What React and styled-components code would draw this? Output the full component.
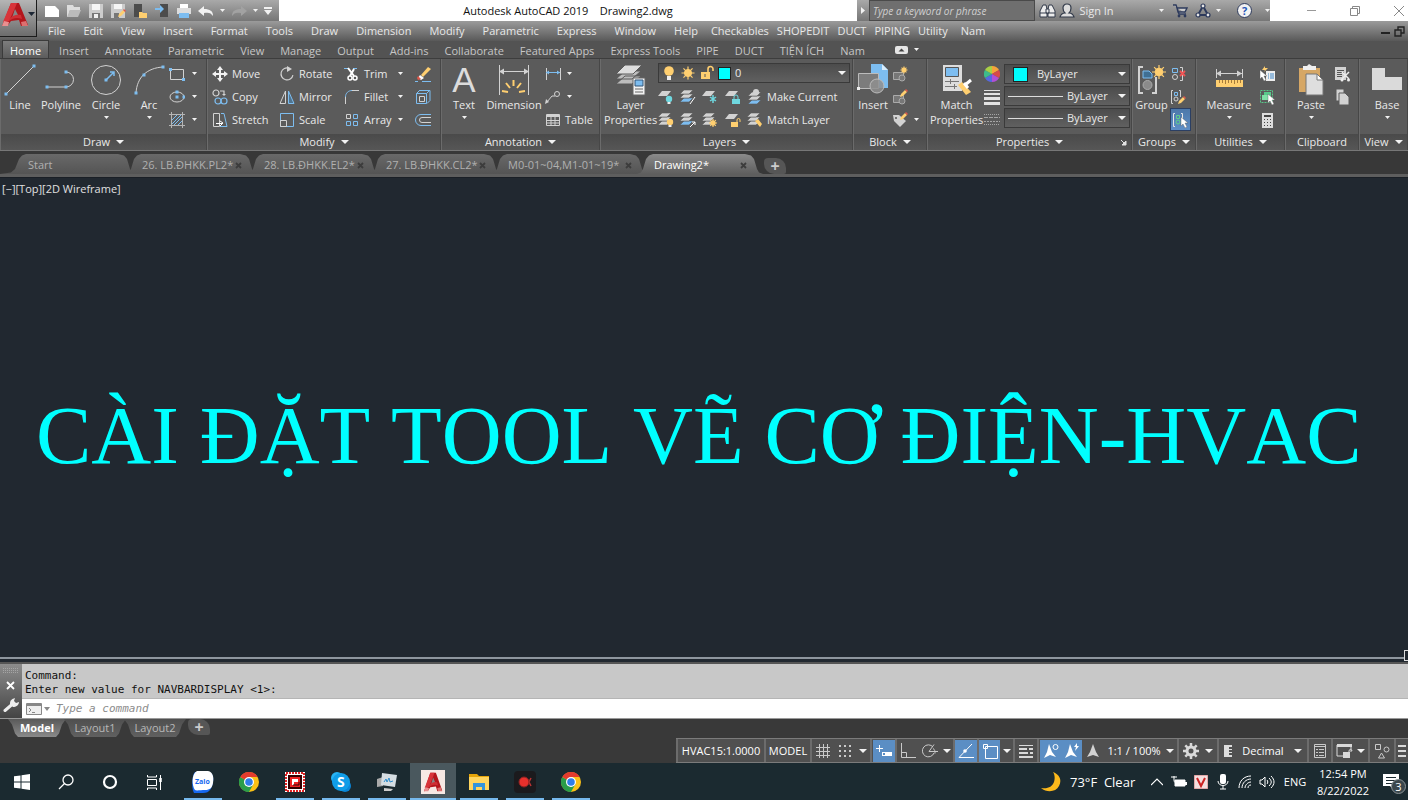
import React, { useState } from "react";
import styled, { createGlobalStyle } from "styled-components";

const GlobalStyle = createGlobalStyle`
  * { box-sizing: border-box; }
  html, body, #root { height: 100%; }
  body {
    margin: 0;
    overflow: hidden;
    background: #212830;
    color: #e9e9e9;
    font-family: "Open Sans", "Noto Sans", sans-serif;
    font-size: 11px;
    line-height: 16px;
  }
  button, input, select {
    font: inherit;
    color: inherit;
    background: none;
    border: 0;
    padding: 0;
    margin: 0;
    outline: 0;
  }
  svg { display: block; flex: none; }
`;

const B = "#7dbdf0";
const G = "#d2d2d2";
const Y = "#ffcf70";

const sheets = (x, y, c = G) => (
  <g stroke="#5b5b5b" strokeWidth="0.6">
    <path d={`M${x} ${y + 12}l4-4h9l-4 4z`} fill={c === "blue" ? B : G} />
    <path d={`M${x} ${y + 8}l4-4h9l-4 4z`} fill={G} />
    <path d={`M${x} ${y + 4}l4-4h9l-4 4z`} fill={G} />
  </g>
);

const sheet = <path d="M0 7l4-5h9l-4 5z" fill={G} />;

const bulb = (x, y, c) => (
  <g>
    <circle cx={x} cy={y} r="3.2" fill={c} />
    <path d={`M${x - 1.5} ${y + 3}h3v2h-3z`} fill="#eee" />
  </g>
);

const sun = (x, y, r) => (
  <g fill={Y} stroke={Y}>
    <circle cx={x} cy={y} r={r * 0.55} />
    <path
      strokeWidth="1.2"
      d={`M${x} ${y - r}v${r * 2}M${x - r} ${y}h${r * 2}M${x - r * 0.7} ${y - r * 0.7}l${r * 1.4} ${r * 1.4}M${x + r * 0.7} ${y - r * 0.7}l${-r * 1.4} ${r * 1.4}`}
    />
  </g>
);

const pencil = (x, y) => (
  <g>
    <path d={`M${x} ${y + 7}l1-3 4-4 2 2-4 4z`} fill={Y} />
    <path d={`M${x + 5} ${y}l1-1 2 2-1 1z`} fill="#e0584a" />
  </g>
);

const cursor = (x, y) => (
  <path d={`M${x} ${y}v9l2-2 2 4 2-1-2-4h3z`} fill="#fff" stroke="#555" strokeWidth="0.4" />
);

const dot = (x, y) => <rect x={x - 1.5} y={y - 1.5} width="3" height="3" fill={B} />;

const logoA = (
  <g>
    <path d="M9 1h8l9 22-7 1-2-6-8 1-3 4-6 1z" fill="#b3161c" />
    <path d="M9 1L1 20l6-1 6-13 2-5z" fill="#d8343a" />
    <path d="M13 7l3 6-6 3z" fill="#858585" />
    <path d="M7 17c4-4 8-5 12-4l1 4c-5-2-9-1-13 2z" fill="#cf2f35" />
    <path d="M0 24l2-5 5 1-1 4z" fill="#e89090" />
    <path d="M20 24l-1-4 5-1 2 5z" fill="#dc7070" />
  </g>
);

const chrome = (
  <g>
    <circle cx="10" cy="10" r="10" fill="#fbc116" />
    <path d="M10 10L1.3 5A10 10 0 0 0 10 20l4.5-8z" fill="#2a9d4a" />
    <path d="M1.3 5A10 10 0 0 1 18.7 5H10v5z" fill="#e33b2e" />
    <circle cx="10" cy="10" r="5" fill="#fff" />
    <circle cx="10" cy="10" r="3.8" fill="#2f7de9" />
  </g>
);

// [width, height, drawing]
const ICONS = {
  autocad: [26, 24, logoA],
  caret: [8, 4, <path d="M0 0h8L4 4z" fill="#f2f2f2" />],
  caretSmall: [5, 3, <path d="M0 0h5L2.5 3z" fill="#f2f2f2" />],
  caretDark: [7, 4, <path d="M0 0h7L3.5 4z" fill="#1d2735" />],
  caretGrey: [6, 4, <path d="M0 0h6L3 4z" fill="#888" />],
  close: [7, 7, <path d="M1 1l5 5M6 1L1 6" stroke="#3c3c3c" strokeWidth="1.8" />],
  newDoc: [16, 16, <path d="M1 3h10l4 4v7H1z" fill="#fff" />],
  open: [16, 16, <g><path d="M1 2h6l1 2h6v3H4L2 14H1z" fill="#ddd" /><path d="M4 7h11l-3 7H1z" fill="#bbb" /></g>],
  save: [16, 16, <g><path d="M1 1h14v14H1z" fill="#ccc" /><path d="M4 1h8v6H4z" fill="#f5f5f5" /><path d="M4 10h8v5H4z" fill="#777" /><path d="M6 11h4v4H6z" fill="#f0f0f0" /></g>],
  saveAs: [16, 16, <g><path d="M1 1h14v14H1z" fill="#ccc" /><path d="M4 1h8v5H4z" fill="#f5f5f5" /><path d="M4 10h5v5H4z" fill="#777" />{pencil(8, 7)}</g>],
  openMobile: [16, 16, <g><path d="M2 1h8v13H2z" fill="#4c4c4c" /><path d="M7 9h3l1 1h4v5H7z" fill={Y} /></g>],
  saveMobile: [16, 16, <g><path d="M6 1h8v13H6z" fill="#4c4c4c" /><path d="M1 5h5V2l4 4-4 4V7H1z" fill={B} /></g>],
  print: [16, 16, <g><path d="M4 1h8v4H4z" fill="#fff" /><path d="M1 5h14v6H1z" fill="#ddd" /><path d="M3 10h10v5H3z" fill={B} /></g>],
  undo: [16, 12, <path d="M0 6l6-5v3c6 0 9 2 9 7-2-3-4-4-9-3v3z" fill="#f2f2f2" />],
  redo: [16, 12, <path d="M16 6l-6-5v3c-6 0-9 2-9 7 2-3 4-4 9-3v3z" fill="#a2a2a2" />],
  customize: [8, 8, <path d="M0 0h8v2H0zM0 3h8L4 8z" fill="#f2f2f2" />],
  play: [4, 7, <path d="M0 0l4 3.5L0 7z" fill="#f2f2f2" />],
  binoculars: [17, 16, <g fill="#ececec" stroke="#333b4a"><path d="M4 2h3l1 4v8H1V8z" /><path d="M10 2h3l3 6v6H9V6z" /><path d="M7 6h3v4H7z" /><path d="M1 10h7M9 10h7" /></g>],
  user: [16, 16, <path d="M8 1c3 0 4 2 4 4s-1 4-2 5c3 0 4 1 5 4H1c1-3 2-4 5-4-1-1-2-3-2-5s1-4 4-4z" fill="#ddd" stroke="#333b4a" strokeWidth="1.2" />],
  cart: [16, 16, <g><path d="M1 2h3l3 9h7M5 5h10l-2 4H6z" fill="#ccc" stroke="#2d3a5c" strokeWidth="1.4" /><circle cx="7" cy="13" r="1.4" fill="#2d3a5c" /><circle cx="13" cy="13" r="1.4" fill="#2d3a5c" /></g>],
  share: [16, 16, <g fill="#e6e6e6" stroke="#2d3a5c" strokeWidth="1.2"><path d="M8 3L3 12h10z" fill="none" strokeWidth="2" /><circle cx="8" cy="3" r="2" /><circle cx="3" cy="12" r="2" /><circle cx="13" cy="12" r="2" /></g>],
  minimize: [9, 9, <path d="M0 4.500h9" stroke="#999" />],
  restore: [10, 10, <g fill="none" stroke="#888"><path d="M.5 2.500h7v7h-7z" /><path d="M2.500 2.500v-2h7v7h-2" /></g>],
  windowClose: [10, 10, <path d="M0 0l10 10M10 0L0 10" stroke="#888" />],
  docMin: [9, 9, <path d="M0 7h9" stroke="#222" strokeWidth="2" />],
  docRestore: [11, 11, <g fill="none" stroke="#222" strokeWidth="1.4"><path d="M1 4h6v6H1z" /><path d="M4 4V1h6v6H7" /></g>],
  ribbonToggle: [13, 8, <g><rect width="13" height="8" rx="2" fill="#e6e6e6" /><path d="M3.500 5.500h6l-3-3z" fill="#444" /></g>],

  line: [34, 34, <g><path d="M3 31L31 3" stroke={G} />{dot(3, 31)}{dot(31, 3)}</g>],
  polyline: [34, 34, <g><path d="M3 24h19a7.500 7.500 0 0 0 0-15" stroke={G} fill="none" />{dot(3, 24)}{dot(22, 24)}{dot(22, 9)}</g>],
  circle: [34, 34, <g><circle cx="17" cy="17" r="14.500" stroke={G} fill="none" /><path d="M17 17l8-8m-4 0h4v4" stroke={B} fill="none" strokeWidth="1.500" />{dot(17, 17)}</g>],
  arc: [34, 34, <g><path d="M4 30C5 14 15 5 31 4" stroke={G} fill="none" />{dot(4, 30)}{dot(12, 12)}{dot(31, 4)}</g>],
  rectangle: [16, 16, <g><path d="M1.500 3.500h13v10h-13z" fill="none" stroke={G} />{dot(1.5, 3.5)}{dot(14.5, 13.5)}</g>],
  ellipse: [16, 16, <g><ellipse cx="8" cy="8" rx="7" ry="5" fill="none" stroke={G} />{dot(8, 8)}{dot(15, 8)}{dot(8, 3)}</g>],
  hatch: [16, 16, <g><path d="M2.500 0v16M13.500 0v16M0 2.500h16M0 13.500h16" stroke="#b5b5b5" fill="none" /><path d="M3 8l5-5M3 12l9-9M5 13l8-8M9 13l4-4" stroke={B} /></g>],
  move: [16, 16, <path d="M8 0l3 4H9v3h3V5l4 3-4 3V9H9v3h2l-3 4-3-4h2V9H4v2L0 8l4-3v2h3V4H5z" fill="#f2f2f2" />],
  copy: [16, 16, <g fill="none" strokeWidth="1.200"><circle cx="4" cy="4" r="3" stroke={G} /><path d="M8 2h4v3" stroke={G} /><circle cx="6" cy="12" r="3" stroke={B} /><circle cx="12" cy="12" r="3" stroke={B} /><path d="M10 5h4l-2 2z" fill={G} /></g>],
  stretch: [16, 16, <g fill="none"><path d="M1.500 1.500h6v13h-6z" stroke={G} /><path d="M9 1.500h3l3 13H8" stroke={B} /><path d="M4 11.500h6M8 9l3 2-3 3" stroke="#fff" /></g>],
  rotate: [16, 16, <g><path d="M9 2a6 6 0 1 0 5 6" fill="none" stroke={G} strokeWidth="1.200" transform="rotate(10 8 8)" /><path d="M8 0l5 3-5 3z" fill={G} /></g>],
  mirror: [16, 16, <g fill="none"><path d="M6.500 2v12.500H1z" stroke={G} /><path d="M9.500 2v12.500H15z" stroke={B} fill="#50748f" /></g>],
  scale: [16, 16, <g fill="none"><path d="M1.500 1.500h13v13h-13z" stroke={B} /><path d="M1.500 8.500h6v6h-6z" stroke={G} /></g>],
  trim: [16, 16, <g><path d="M0 2.500h5M9 2.500h4" stroke={B} /><path d="M4 2l6 8M10 3L6 10" stroke="#fff" strokeWidth="2" /><circle cx="6" cy="12" r="2" fill="none" stroke="#fff" strokeWidth="1.500" /><circle cx="11" cy="12" r="2" fill="none" stroke="#fff" strokeWidth="1.500" /></g>],
  fillet: [16, 16, <g fill="none"><path d="M1.500 8c0-4 3-6.500 6.500-6.500" stroke={B} /><path d="M1.500 8v7M8 1.500h7" stroke={G} /></g>],
  array: [16, 16, <g fill="none"><path d="M2.500 2.500h4v4h-4z" stroke={G} /><path d="M9.500 2.500h4v4h-4zM2.500 9.500h4v4h-4zM9.500 9.500h4v4h-4z" stroke={B} /></g>],
  erase: [16, 16, <g><path d="M6 9l7-8 3 2-8 8z" fill={Y} /><path d="M5 9l4 3-3 2-3-2z" fill="#fff" /><path d="M3 10l3 3-3 1-1-2z" fill="#e0584a" /><path d="M0 15.500h3M7 15.500h9" stroke={B} /></g>],
  explode: [16, 16, <g fill="none"><path d="M4 1.500h11v10l-3 3" stroke={B} /><path d="M1.500 4.500h10v10h-10zM1.500 4.500l3-3M11.500 4.500l3-3" stroke={B} /><path d="M4.500 7.500h5v5h-5z" stroke={G} /></g>],
  offset: [16, 16, <g fill="none"><path d="M16 2.500H6a5 5 0 0 0 0 11h10" stroke={B} /><path d="M16 5.500H7a2.500 2.500 0 0 0 0 5h9" stroke={G} /></g>],

  dimension: [34, 34, <g><path d="M2.500 2v30M31.500 2v30M2 8.500h29" stroke={G} fill="none" /><path d="M2 8.500l5-3v6zM32 8.500l-5-3v6z" fill={G} /><path d="M16.500 17v6M9 20l4 5M24 20l-4 5M5 28l6 1M28 28l-6 1" stroke={Y} strokeWidth="2" /></g>],
  linear: [16, 16, <g><path d="M1.500 2v12M15.500 2v12" stroke={G} /><path d="M1 6.500h14" stroke={B} /><path d="M1 6.500l3-2v4zM15 6.500l-3-2v4z" fill={B} /></g>],
  leader: [16, 16, <g fill="none" stroke={G}><path d="M2 13l5-6h3" /><circle cx="12" cy="5" r="2.500" /><path d="M0 15l1-5 3 3z" fill={G} stroke="none" /></g>],
  table: [16, 16, <g fill="none" stroke={G}><path d="M1.500 2.500h13v11h-13zM1.500 8.500h13M1.500 11h13M6 5v8M10 5v8" /><path d="M1 4h14" strokeWidth="2" /></g>],
  layerProps: [34, 36, <g><path d="M2 22l9-8h16l-9 8zM2 17l9-8h16l-9 8z" fill="#bdbdbd" stroke="#5b5b5b" /><path d="M2 12L11 3h17l-9 9z" fill="#ddd" stroke="#5b5b5b" /><path d="M19 16h12v17H19z" fill="#f2f2f2" stroke="#666" /><path d="M21 18h8v6h-8z" fill={B} stroke="#357" /><path d="M21 27h8M21 30h8" stroke="#666" /></g>],
  bulbOn: [14, 16, <g><circle cx="7" cy="6" r="4.800" fill={Y} /><path d="M5 11h4v4H5z" fill="#eee" /></g>],
  sun: [16, 16, sun(8, 8, 6.5)],
  unlock: [14, 16, <g><path d="M8 7V4a2.500 2.500 0 0 1 5 0v2" fill="none" stroke={Y} strokeWidth="1.600" /><path d="M1 7h9v7H1z" fill={Y} /><path d="M5 9v3" stroke="#555" /></g>],
  layOff: [16, 16, <g>{sheet}{bulb(11, 10, "#6fd8e0")}</g>],
  layIso: [16, 16, <g>{sheets(0, 1, "blue")}<path d="M10 15l5-7" stroke="#fff" /></g>],
  layFreeze: [16, 16, <g>{sheet}<path d="M11 6v8M8 8l6 4M14 8l-6 4" stroke="#6fd8e0" strokeWidth="1.500" /></g>],
  layLock: [16, 16, <g>{sheet}<path d="M9 10V8a2 2 0 0 1 4 0v2" fill="none" stroke="#6fd8e0" /><path d="M7 10h8v5H7z" fill="#6fd8e0" /></g>],
  layCurrent: [16, 16, <g>{sheets(1, 3, "blue")}<circle cx="9" cy="3" r="3" fill={G} /></g>],
  layOn: [16, 16, <g>{sheets(0, 1)}{bulb(12, 10, Y)}</g>],
  layUniso: [16, 16, <g>{sheets(0, 1, "blue")}<path d="M10 15l5-5m-3 0h3v3" stroke="#fff" fill="none" /></g>],
  layThaw: [16, 16, <g>{sheets(0, 1)}{sun(11, 11, 4)}</g>],
  layUnlock: [16, 16, <g>{sheet}<path d="M12 10V8a1.500 1.500 0 0 1 3 0v2" fill="none" stroke={Y} /><path d="M6 10h7v5H6z" fill={Y} /></g>],
  layMatch: [16, 16, <g>{sheets(0, 1)}<path d="M8 9l3-2 4 5-2 3z" fill={Y} /></g>],

  insert: [32, 34, <g><path d="M14 1h11l6 6v18H14z" fill={B} /><path d="M25 1v6h6z" fill="#d8ecfb" /><path d="M1.500 10.500h20v15h-20z" fill="#7c7c7c" stroke="#bbb" /><circle cx="20" cy="23" r="7" fill="#8f8f8f" fillOpacity="0.850" stroke="#bbb" /><path d="M0 24h3v3H0z" fill="#eee" /></g>],
  createBlock: [16, 16, <g><path d="M1.500 6.500h10v7h-10z" fill="#777" stroke="#aaa" /><circle cx="10" cy="12" r="3" fill="#777" stroke="#aaa" />{sun(12, 4, 3.5)}</g>],
  editBlock: [16, 16, <g><path d="M1.500 6.500h10v7h-10z" fill="#777" stroke="#aaa" /><circle cx="10" cy="12" r="3" fill="#777" stroke="#aaa" />{pencil(8, 1)}</g>],
  attribute: [16, 16, <g><path d="M1 3h6l7 6-6 6-6-6z" fill={G} /><circle cx="4" cy="6" r="1" fill="#555" />{pencil(8, 1)}</g>],
  matchProps: [34, 34, <g><path d="M3 2h19v26H3z" fill="#ddd" /><path d="M5.500 4.500h13v9h-13z" fill={B} stroke="#555" /><path d="M5 18.500h14M5 23.500h12M10.500 16v5M14.500 21v5" stroke="#777" /><path d="M18 22l4-3 9 10-5 3z" fill={Y} /><path d="M25 22l6-5M24 20l4 5" stroke="#fff" strokeWidth="3" /></g>],
  wheel: [16, 16, <g><path d="M8 8V0a8 8 0 0 1 7 4z" fill="#f5a33b" /><path d="M8 8l7-4a8 8 0 0 1 0 8z" fill="#d74a4a" /><path d="M8 8l7 4a8 8 0 0 1-7 4z" fill="#b04fd6" /><path d="M8 8v8a8 8 0 0 1-7-4z" fill="#5668e0" /><path d="M8 8l-7 4a8 8 0 0 1 0-8z" fill="#3dbb8b" /><path d="M8 8L1 4a8 8 0 0 1 7-4z" fill="#a9d046" /></g>],
  weights: [16, 16, <path d="M0 1h16v1H0zM0 4h16v2H0zM0 8h16v3H0zM0 13h16v3H0z" fill="#e2e2e2" />],
  linetypes: [16, 16, <g stroke="#a5a5a5"><path d="M0 2.500h16M0 12.500h16" strokeDasharray="1 1" /><path d="M0 5.500h16" strokeDasharray="4 1" /><path d="M0 9.500h16" strokeDasharray="2 1" /></g>],
  group: [30, 32, <g><path d="M6 3H2v26h4M15 29h4V13" fill="none" stroke={G} strokeWidth="2" /><path d="M6 7h6l3 3v4H6z" fill="#3f6f93" stroke={B} /><circle cx="10.500" cy="21" r="4.500" fill="#8a8a8a" stroke="#aaa" />{sun(22, 8, 7)}</g>],
  ungroup: [16, 16, <g fill="none"><path d="M2.500 2.500h5v4h-5z" stroke={B} /><circle cx="5" cy="11" r="2.500" stroke={G} /><path d="M10 1.500h2.500v13H10" stroke={G} /><path d="M10 5l5 5M15 5l-5 5" stroke="#e55" strokeWidth="2" /></g>],
  groupEdit: [16, 16, <g fill="none"><path d="M3 1.500H1.500v13H3M9 1.500h1.500V8" stroke={G} /><path d="M4.500 3.500h3v3h-3z" stroke={B} /><circle cx="6" cy="10" r="2" stroke={G} />{pencil(8, 8)}</g>],
  groupSelect: [16, 16, <g fill="none"><path d="M3 1.500H1.500v13H3M9 1.500h1.500V8" stroke="#e6e6e6" /><path d="M4.500 3.500h3v3h-3z" stroke="#5fd08a" /><circle cx="6" cy="10" r="2" stroke="#5fd08a" />{cursor(9, 5)}</g>],
  measure: [30, 30, <g><path d="M2.500 4v9M28.500 4v9M2 8.500h26" stroke={G} /><path d="M2 8.500l5-3v6zM28 8.500l-5-3v6z" fill={G} /><path d="M2 15h27v7H2z" fill={Y} /><path d="M5.500 15v3M8.500 15v3M11.500 15v4M14.500 15v3M17.500 15v3M20.500 15v4M23.500 15v3M26.500 15v3" stroke="#a67c3a" /></g>],
  quickSelect: [16, 16, <g><path d="M7 5h9v10H7z" fill="#eee" /><path d="M9 8h1M9 10h1M9 12h1M11 8h4M11 10h4M11 12h4" stroke="#3f87c8" />{cursor(1, 4)}<path d="M6 0L3 4h3L5 6l4-4H6z" fill={Y} /></g>],
  selectAll: [16, 16, <g><path d="M1.500 1.500h12v12h-12z" fill="none" stroke="#58c98a" strokeDasharray="2 1" /><path d="M5 3h7v6H5z" fill="#58c98a" /><path d="M3 6h7v5H3z" fill="#7fe0a6" />{cursor(9, 5)}</g>],
  calculator: [16, 16, <g><path d="M3 1h11v15H3z" fill="#ddd" /><path d="M5 3h7v2H5zM5 7h1v1H5zM8 7h1v1H8zM11 7h1v1h-1zM5 10h1v1H5zM8 10h1v1H8zM11 10h1v1h-1zM5 13h1v1H5zM8 13h1v1H8zM11 13h1v1h-1z" fill="#444" /></g>],
  paste: [28, 32, <g><path d="M2 4h21v24H2z" fill="#d6a765" /><path d="M6 2h4l2-2 3 2h4v4H6z" fill="#f0f0f0" /><path d="M9 10h11l6 6v15H9z" fill="#dedede" stroke="#777" /><path d="M20 10v6h6z" fill="#fff" stroke="#777" /></g>],
  cut: [16, 16, <g><path d="M1 1h11v13H1z" fill={G} /><path d="M3 4.500h7M3 6.500h7M3 8.500h5M3 10.500h5" stroke="#555" /><path d="M8 6l7 7M15 6l-7 7" stroke="#eee" strokeWidth="1.500" /><circle cx="8" cy="14" r="1.500" fill="#eee" /><circle cx="14.500" cy="14" r="1.500" fill="#eee" /></g>],
  copyClip: [16, 16, <g fill={G} stroke="#5b5b5b"><path d="M2 0h8v12H2z" /><path d="M5 4h6l4 4v8H5z" /></g>],
  base: [30, 30, <path d="M0 3h13v9h17v13H0z" fill="#dadada" />],
  launcher: [7, 7, <path d="M1 1l4 4M6 2v4H2z" stroke="#e2e2e2" fill="#e2e2e2" />],

  grip: [16, 5, <path d="M0 .5h16M0 2.500h16M0 4.500h16" stroke="#a5a5a5" strokeDasharray="1 1" />],
  cmdClose: [9, 9, <path d="M1 1l7 7M8 1L1 8" stroke="#fff" strokeWidth="1.800" />],
  wrench: [16, 14, <g><path d="M2 12.500l7-6" stroke="#eee" strokeWidth="3" strokeLinecap="round" /><path d="M7 6c0-4 2-5 5-6l-1 3 2 2 3-1c0 3-3 5-6 5z" fill="#eee" /></g>],
  prompt: [16, 12, <g><path d="M.5.5h15v11H.5z" fill="#eee" stroke="#888" /><path d="M1 2h14" stroke="#888" strokeWidth="2" /><path d="M3 5l2 2-2 2M6 9.500h3" stroke="#888" fill="none" /></g>],

  grid: [16, 16, <path d="M4.500 1v14M8.500 1v14M12.500 1v14M1 4.500h14M1 8.500h14M1 12.500h14" stroke="#c9c9c9" />],
  dots: [16, 16, <path d="M2 3h12M2 8h12M2 13h12" stroke="#c9c9c9" strokeWidth="2" strokeDasharray="2 3" />],
  dyn: [18, 16, <g><path d="M4.500 2v7M1 5.500h7" stroke="#fff" /><path d="M7 9h10v4H7z" fill="#fff" /><path d="M8 10h2v2H8z" fill="#5b8ec4" /></g>],
  ortho: [16, 16, <path d="M1.500 0v14.500H16M1.500 9.500h5v5" stroke="#c9c9c9" fill="none" />],
  polar: [16, 16, <g fill="none" stroke="#c9c9c9"><path d="M11 4a6 6 0 1 0 1 6M7 8.500h9M7 8.500l5-7M11 5.500c2 1 2 3 2 5" /></g>],
  track: [16, 16, <g><path d="M1 14.500h15M1 14.500L14 1" stroke="#fff" /><circle cx="7" cy="8" r="1.800" fill="#fff" /></g>],
  osnap: [16, 16, <path d="M3.500 3.500h12v12h-12zM1.500 1.500h4v4h-4z" stroke="#fff" fill="#5b8ec4" />],
  lwt: [16, 16, <path d="M1 2h14v1H1zM1 5h8v2H1zM11 5h4v2h-4zM1 9h9v2H1zM12 9h3v2h-3zM1 13h14v2H1z" fill="#d9d9d9" />],
  annoVis: [16, 16, <g><path d="M6 1l3 8 4 5-6-2-6 3 3-6z" fill="#fff" /><circle cx="12.500" cy="4" r="2.500" fill="none" stroke="#fff" /></g>],
  annoAuto: [16, 16, <g><path d="M6 1l3 8 4 5-6-2-6 3 3-6z" fill="#fff" /><path d="M13 0l-3 4h2l-1 4 4-5h-2z" fill="#fff" /></g>],
  anno: [16, 16, <path d="M8 1l3 8 3 5-6-2-6 2 3-5z" fill="#d2d2d2" />],
  gear: [16, 16, <g><circle cx="8" cy="8" r="4" fill="none" stroke="#d9d9d9" strokeWidth="3" /><path d="M8 0v3M8 13v3M0 8h3M13 8h3M2.300 2.300l2 2M11.700 11.700l2 2M13.700 2.300l-2 2M4.300 11.700l-2 2" stroke="#d9d9d9" strokeWidth="2.500" /></g>],
  ruler: [12, 16, <path d="M2 2h8v2H7v2h3v1H7v2h3v1H7v2h3v2H2z" fill="#ddd" />],
  quickProps: [14, 16, <g fill="none" stroke="#c9c9c9"><path d="M1.500 1.500h11v13h-11zM1.500 3.500h11" /><path d="M3 6.500h2M3 9.500h2M3 12.500h2M6 6.500h5M6 9.500h5M6 12.500h5" /></g>],
  lockUi: [17, 16, <g><path d="M1 2.500h14V9M8 13H1V2" fill="none" stroke="#d9d9d9" /><path d="M1 1h15v3H1z" fill="#d9d9d9" /><path d="M7 9h7v6H7z" fill="#d9d9d9" /><path d="M13 10V8a1.500 1.500 0 0 1 3 0" fill="none" stroke="#d9d9d9" /></g>],
  isolate: [16, 16, <g fill="none" stroke="#c9c9c9"><path d="M1.500 1.500h5v5h-5zM7.500 10l3 5h-6z" /><circle cx="12.500" cy="6.500" r="2.500" /></g>],
  menu: [8, 14, <path d="M0 2h8M0 7h8M0 12h8" stroke="#d9d9d9" strokeWidth="2" />],

  windows: [16, 16, <path d="M0 2.300l6.500-.9v6.100H0zM7.500 1.300L16 0v7.500H7.500zM0 8.500h6.500v6.100L0 13.700zM7.500 8.500H16V16l-8.500-1.200z" fill="#fff" />],
  search: [16, 16, <g fill="none" stroke="#fff" strokeWidth="1.300"><circle cx="10" cy="6" r="5" /><path d="M6.500 9.500L1 15" /></g>],
  cortana: [16, 16, <circle cx="8" cy="8" r="6" fill="none" stroke="#fff" strokeWidth="2.200" />],
  taskview: [16, 16, <g fill="none" stroke="#fff"><path d="M1.500 5.500h9v6h-9zM1.500 1v2h9V1M1.500 16v-2h9v2M14.500 1v15" /><path d="M14.500 4v4" strokeWidth="2.500" /></g>],
  zalo: [24, 24, <g><path d="M4 2h14c3 1 5 4 4 10s-3 11-10 11H3c-3-5-2-18 1-21z" fill="#1668f0" /><path d="M6 1h11c5 1 6 6 5 12-1 5-3 7-8 7-4 0-9 1-10 0C1 16 0 4 6 1z" fill="#fff" /><text x="4" y="14" fontSize="7" fontWeight="700" fill="#1668f0">Zalo</text></g>],
  chrome: [20, 20, chrome],
  pixel: [20, 20, <g><path d="M0 0h20v20H0z" fill="#fff" /><path d="M1 1h18v18H1z" fill="none" stroke="#d22" strokeWidth="2" strokeDasharray="2 1" /><path d="M4 4h12v12H4z" fill="#e22" stroke="#300" strokeWidth="2" /><path d="M7 7h6v3H9v3H7z" fill="#fff" /><path d="M8 13h6v-3" stroke="#300" fill="none" /></g>],
  skype: [20, 20, <g><circle cx="6" cy="6" r="6" fill="#28b4f4" /><circle cx="14" cy="14" r="6" fill="#0a86d8" /><circle cx="10" cy="10" r="9" fill="#109de8" /><text x="6" y="15" fontSize="14" fontWeight="700" fill="#fff">S</text></g>],
  monitor: [20, 20, <g><path d="M0 7l6-2v9l-6 1z" fill="#aaa" /><path d="M5 1l15 2-2 12-14-2z" fill="#d5dde2" /><path d="M7 10l2-3 1 3 2-4 1 4 3-1" stroke="#2c8ccc" fill="none" /><path d="M7 16l9 1-2 2H7z" fill="#ccc" /></g>],
  acadTile: [24, 24, <g><path d="M0 0h24v24H0z" fill="#f7e9e4" /><g transform="translate(3 2) scale(.7 .8)">{logoA}</g></g>],
  explorer: [20, 18, <g><path d="M0 1h8l2 2h10v14H0z" fill="#e5a50a" /><path d="M0 4h20v13H0z" fill="#ffd55e" /><path d="M4 17v-7h12v7h-3v-3H7v3z" fill="#3294dc" /></g>],
  recorder: [22, 22, <g><rect width="22" height="22" rx="4" fill="#1b1a1d" /><path d="M17 7l-2 4 2 4" stroke="#b33" strokeWidth="1.500" fill="none" /><circle cx="10" cy="11" r="5" fill="#e8302c" stroke="#822" /></g>],
  moon: [22, 20, <path d="M13 0c7 3 9 8 6 14s-12 7-18 2c7 1 11-1 13-6 1-3 1-7-1-10z" fill="#fcb91c" />],
  chevron: [12, 8, <path d="M0 7l6-6 6 6" fill="none" stroke="#fff" strokeWidth="1.200" />],
  battery: [16, 12, <g><path d="M4 4h10v6H4z" fill="#fff" stroke="#fff" /><path d="M15 6v3" stroke="#fff" strokeWidth="2" /><path d="M0 1h6M3 0v4c0 2 1 3 3 3" stroke="#fff" fill="none" /></g>],
  unikey: [14, 14, <g><path d="M0 0h14v14H0z" fill="#f4dede" stroke="#c77" /><path d="M3 3l4 8 4-8" fill="none" stroke="#c22" strokeWidth="2" /></g>],
  mic: [12, 16, <g><rect x="3" y="0" width="6" height="10" rx="2" fill="#fff" /><path d="M1 7c0 6 10 6 10 0M6 12v3M3 15h6" fill="none" stroke="#fff" /></g>],
  wifi: [14, 14, <g fill="none" stroke="#fff"><path d="M1 13C1 6 6 1 13 1M4 13c0-5 4-9 9-9M7 13c0-3 3-6 6-6M10 13c0-2 1-3 3-3" /></g>],
  speaker: [16, 14, <g fill="none" stroke="#fff"><path d="M1 5h2l3-3v10L3 9H1zM8 5c1 1 1 3 0 4M10 3c3 3 3 5 0 8M12 1c4 4 4 8 0 12" /></g>],
  notes: [16, 16, <g><path d="M0 0h16v12h-5v4l-4-4H0z" fill="#fff" /><path d="M3 3.500h10M3 6.500h10M3 9.500h10" stroke="#1b2a30" /></g>],
};

const Icon = ({ name }) => {
  const [w, h, drawing] = ICONS[name];
  return (
    <svg width={w} height={h} viewBox={`0 0 ${w} ${h}`} aria-hidden="true">
      {drawing}
    </svg>
  );
};

const Window = styled.div`
  height: 100vh;
  display: flex;
  flex-direction: column;
`;

const Header = styled.header`
  display: grid;
  grid-template-columns: 37px 1fr;
  grid-template-rows: 21px 20px;
  background: linear-gradient(#a0a0a0 21px, #9b9b9b 21px, #595959);
`;

const AppButton = styled.button`
  grid-row: 1 / 3;
  height: 37px;
  display: flex;
  align-items: center;
  justify-content: space-between;
  padding: 0 1px 8px 2px;
  background: linear-gradient(#b5b5b5, #6c6c6c);
  border-right: 1px solid #1c1c1c;
  border-bottom: 1px solid #1c1c1c;
`;

const TitleBar = styled.div`
  display: flex;
  background: #fff;
`;

const TitleGroup = styled.div`
  display: flex;
  align-items: center;
  flex: none;
  gap: ${(props) => props.$gap || 0}px;
  width: ${(props) => props.$w}px;
  padding: 0 ${(props) => props.$pad || 0}px;
  background: linear-gradient(#a9a9a9, #767676);
  overflow: hidden;
`;

const IconButton = styled.button`
  display: flex;
  align-items: center;
  justify-content: center;
  flex: none;
  width: ${(props) => (props.$w ? `${props.$w}px` : "auto")};
`;

const WindowTitle = styled.h1`
  flex: 1;
  margin: 0;
  font-size: 11px;
  font-weight: 400;
  line-height: 22px;
  color: #111;
  text-align: center;
  white-space: pre;
`;

const SearchBox = styled.input`
  && {
    width: 167px;
    height: 21px;
    padding: 0 3px;
    background: #6f6f6f;
    border: 1px solid #4a4a4a;
    font-size: 10px;
    font-style: italic;
  }
  &::placeholder {
    color: #d0d0d0;
    opacity: 1;
  }
`;

const SignIn = styled.button`
  display: flex;
  align-items: center;
  gap: 4px;
  width: 97px;
`;

const HelpBadge = styled.span`
  width: 15px;
  height: 15px;
  border-radius: 50%;
  background: #f2f2f2;
  border: 1px solid #2d3a5c;
  color: #2456b8;
  font-weight: 700;
  line-height: 13px;
`;

const WindowControls = styled.div`
  display: flex;
  align-items: center;
  justify-content: space-between;
  width: 138px;
  padding: 0 4px 0 37px;
`;

const MenuBar = styled.nav`
  display: flex;
  align-items: center;
  gap: 8px;
  padding-left: 6px;
`;

const MenuItem = styled.button`
  padding: 0 ${(props) => (props.$wide ? 5 : 0)}px;
  white-space: nowrap;
`;

const DocControls = styled.div`
  display: flex;
  gap: 4px;
  margin-left: auto;
  padding-right: 3px;
`;

const RibbonTabs = styled.nav`
  display: flex;
  align-items: flex-end;
  height: 18px;
  padding-left: 3px;
  background: #535353;
  border-bottom: 1px solid #3d3d3d;
`;

const RibbonTab = styled.button`
  height: 17px;
  padding: 2px ${(props) => (props.$active ? 7 : 8)}px 0;
  margin-right: ${(props) => (props.$active ? 3 : 0)}px;
  color: ${(props) => (props.$active ? "#fff" : "#c6c6c6")};
  background: ${(props) =>
    props.$active ? "linear-gradient(#7d7d7d, #5c5c5c)" : "none"};
  box-shadow: ${(props) =>
    props.$active ? "0 0 0 1px #3b3b3b" : "none"};
  white-space: nowrap;
`;

const TabToggle = styled.button`
  display: flex;
  align-items: center;
  gap: 6px;
  height: 17px;
  margin-left: 22px;
`;

const Ribbon = styled.div`
  display: flex;
  height: 92px;
  background: #5b5b5b;
  border-bottom: 1px solid #777;
`;

const Panel = styled.section`
  display: flex;
  flex-direction: column;
  flex: ${(props) => (props.$w ? `0 0 ${props.$w}px` : "1 0 0")};
  min-width: 0;
  border-left: 1px solid #6b6b6b;
  border-right: 1px solid #474747;
`;

const PanelBody = styled.div`
  display: flex;
  height: 75px;
  padding: 3px 0 0 ${(props) => props.$pad || 0}px;
`;

const PanelTitle = styled.h2`
  display: flex;
  align-items: center;
  justify-content: center;
  gap: 6px;
  height: 16px;
  margin: 0;
  font-size: 11px;
  font-weight: 400;
  line-height: 16px;
  background: linear-gradient(#4a4a4a, #565656);
`;

const Launcher = styled.button`
  position: absolute;
  right: 4px;
  top: 5px;
`;

const TitleWithLauncher = styled.div`
  position: relative;
`;

const BigTool = styled.button`
  display: flex;
  flex-direction: column;
  align-items: center;
  flex: none;
  width: ${(props) => props.$w}px;
  height: 66px;
  line-height: 15px;
  white-space: pre;
`;

const BigIcon = styled.span`
  display: flex;
  align-items: center;
  justify-content: center;
  height: 35px;
`;

const BigLetter = styled.span`
  font-family: "Liberation Sans", sans-serif;
  font-size: 35px;
  line-height: 35px;
  color: #dcdcdc;
`;

const ArrowSlot = styled.span`
  padding-top: 4px;
`;

const ToolGrid = styled.div`
  display: grid;
  grid-template-columns: ${(props) => props.$cols};
  grid-auto-rows: 23px;
  align-content: start;
  flex: none;
`;

const Tool = styled.button`
  display: flex;
  align-items: center;
  gap: ${(props) => props.$gap || 4}px;
  background: ${(props) =>
    props.$on ? "linear-gradient(#4c77a8, #5f90c8)" : "none"};
  box-shadow: ${(props) => (props.$on ? "inset 0 0 0 1px #2b3f63" : "none")};
  padding: ${(props) => (props.$on ? "0 2px" : 0)};
  white-space: nowrap;
`;

const ToolLabel = styled.span`
  width: ${(props) => (props.$w ? `${props.$w}px` : "auto")};
  text-align: left;
`;

const ComboBox = styled.label`
  display: flex;
  align-items: center;
  flex: none;
  gap: 4px;
  width: ${(props) => props.$w}px;
  height: 20px;
  padding: 0 3px;
  background: linear-gradient(#4c4c4c, #606060);
  border: 1px solid #3a3a3a;
  select {
    appearance: none;
    flex: ${(props) => (props.$fixed ? "0 0 47px" : 1)};
    min-width: 0;
  }
`;

const Swatch = styled.span`
  flex: none;
  width: ${(props) => props.$size}px;
  height: ${(props) => props.$size}px;
  margin: 0 ${(props) => props.$gap || 0}px;
  background: #00ffff;
  border: 1px solid #222;
`;

const LineSample = styled.span`
  flex: 1;
  height: 1px;
  background: #ddd;
`;

const Stack = styled.div`
  display: flex;
  flex-direction: column;
  gap: ${(props) => props.$gap || 0}px;
  padding-top: ${(props) => props.$top || 0}px;
`;

const FileTabs = styled.nav`
  display: flex;
  align-items: flex-end;
  height: 27px;
  padding-bottom: 3px;
  background: linear-gradient(#383838 23px, #5e5e5e 23px);
  border-bottom: 1px solid #1a1f26;
`;

const FileTab = styled.div`
  display: flex;
  align-items: center;
  justify-content: space-between;
  flex: none;
  width: ${(props) => props.$w}px;
  height: 20px;
  margin-right: -11px;
  padding: 2px 16px 0 17px;
  color: ${(props) => (props.$active ? "#fff" : "#b0b0b0")};
  background: ${(props) =>
    props.$active
      ? "linear-gradient(#8a8a8a, #5e5e5e)"
      : "linear-gradient(#696969, #545454)"};
  clip-path: polygon(
    0 100%, 4px 92%, 6px 75%, 9px 25%, 12px 8%, 16px 0,
    calc(100% - 18px) 0, calc(100% - 12px) 8%, calc(100% - 9px) 25%,
    calc(100% - 6px) 75%, calc(100% - 4px) 92%, 100% 100%
  );
  white-space: nowrap;
  &:first-child {
    padding-left: 28px;
    clip-path: polygon(
      0 100%, 11px 92%, 15px 75%, 19px 25%, 22px 8%, 26px 0,
      calc(100% - 18px) 0, calc(100% - 12px) 8%, calc(100% - 9px) 25%,
      calc(100% - 6px) 75%, calc(100% - 4px) 92%, 100% 100%
    );
  }
`;

const AddTab = styled.button`
  && {
    width: 22px;
    height: 16px;
    margin-left: ${(props) => props.$gap}px;
    background: #565656;
    border-radius: 4px 10px 2px 10px;
    font-size: 16px;
    font-weight: 700;
    line-height: 14px;
    color: #ccc;
  }
`;

const Canvas = styled.main`
  position: relative;
  flex: 1;
  display: flex;
  flex-direction: column;
  background: #212830;
  border-bottom: 2px solid #8e969e;
`;

const ViewControls = styled.div`
  padding: 3px 2px;
  color: #e0e0e0;
`;

const Drawing = styled.p`
  margin: auto 0;
  padding: 13px 0 0 36px;
  font-family: "Liberation Serif", serif;
  font-size: 83px;
  line-height: 96px;
  font-kerning: none;
  color: #00ffff;
  white-space: nowrap;
`;

const PickBox = styled.span`
  position: absolute;
  right: -7px;
  bottom: -4px;
  width: 11px;
  height: 11px;
  border: 1px solid #ddd;
  background: #212830;
`;

const CommandWindow = styled.section`
  display: flex;
  height: 57px;
  margin-top: 3px;
  border-top: 2px solid #555;
  border-bottom: 1px solid #999;
  font-family: "DejaVu Sans Mono", monospace;
  line-height: 14px;
  background: #555;
`;

const CommandGutter = styled.div`
  display: flex;
  flex-direction: column;
  align-items: center;
  justify-content: space-between;
  width: 22px;
  padding: 4px 1px 6px 0;
  background: linear-gradient(#8c8c8c, #444);
`;

const CommandMain = styled.div`
  flex: 1;
  display: flex;
  flex-direction: column;
  background: #fff;
`;

const CommandLog = styled.div`
  height: 35px;
  padding: 5px 3px 0;
  color: #111;
  background: #c8c8c8;
  border-bottom: 1px solid #b5b5b5;
  white-space: pre;
`;

const CommandLine = styled.label`
  display: flex;
  align-items: center;
  gap: 2px;
  flex: 1;
  padding-left: 4px;
  input {
    flex: 1;
    padding-left: 4px;
    color: #222;
    font-style: italic;
  }
  input::placeholder {
    color: #8d8d8d;
    opacity: 1;
  }
`;

const BottomBar = styled.footer`
  display: flex;
  justify-content: space-between;
  height: 44px;
  background: #393939;
`;

const LayoutTabs = styled.nav`
  display: flex;
  padding-left: 8px;
  align-items: flex-start;
`;

const LayoutTab = styled.button`
  height: 18px;
  width: ${(props) => props.$w}px;
  margin-right: -2px;
  color: ${(props) => (props.$active ? "#fff" : "#b8b8b8")};
  font-weight: ${(props) => (props.$active ? 700 : 400)};
  background: ${(props) =>
    props.$active
      ? "linear-gradient(#595959, #8a8a8a)"
      : "linear-gradient(#4f4f4f, #606060)"};
  clip-path: polygon(
    0 0, 100% 0, calc(100% - 4px) 30%, calc(100% - 7px) 80%,
    calc(100% - 10px) 100%, 10px 100%, 7px 80%, 4px 30%
  );
`;

const StatusBar = styled.div`
  display: flex;
  align-self: flex-end;
  height: 25px;
  background: #505050;
  border-top: 1px solid #7b7b7b;
  border-bottom: 1px solid #7b7b7b;
`;

const StatusGroup = styled.div`
  display: flex;
  align-items: center;
  justify-content: center;
  flex: none;
  width: ${(props) => props.$w}px;
  border-left: 2px solid #6c6c6c;
  color: #fff;
  overflow: hidden;
  white-space: nowrap;
`;

const StatusButton = styled.button`
  display: flex;
  align-items: center;
  justify-content: center;
  flex: 0 0 ${(props) => props.$w}px;
  height: 22px;
  background: ${(props) => (props.$on ? "#5b8ec4" : "none")};
`;

const Taskbar = styled.footer`
  display: flex;
  height: 37px;
  background: #1b2a30;
  color: #fff;
`;

const TaskGroup = styled.div`
  display: flex;
  padding-right: ${(props) => props.$pad || 0}px;
`;

const TaskButton = styled.button`
  display: flex;
  align-items: center;
  justify-content: center;
  width: ${(props) => props.$w}px;
  background: ${(props) => (props.$active ? "#4a585e" : "none")};
  position: relative;
  &::after {
    content: "";
    position: absolute;
    left: ${(props) => (props.$active ? 0 : 4)}px;
    right: ${(props) => (props.$active ? 0 : 4)}px;
    bottom: 0;
    height: 2px;
    background: ${(props) => (props.$open ? "#76b9ed" : "none")};
  }
`;

const Tray = styled.div`
  display: flex;
  align-items: center;
  margin-left: auto;
`;

const Weather = styled.button`
  && {
    display: flex;
    align-items: center;
    gap: 8px;
    width: 106px;
    font-size: 13px;
    white-space: pre;
  }
`;

const Language = styled.button`
  width: 34px;
`;

const Clock = styled.time`
  width: 62px;
  text-align: center;
  line-height: 17px;
`;

const Notifications = styled.button`
  position: relative;
  display: flex;
  justify-content: center;
  width: 34px;
`;

const Badge = styled.span`
  position: absolute;
  right: 2px;
  top: 5px;
  width: 15px;
  height: 15px;
  border-radius: 50%;
  background: #3b474c;
  border: 1px solid #8a9296;
  line-height: 13px;
`;

const menus = [
  "File", "Edit", "View", "Insert", "Format", "Tools", "Draw", "Dimension",
  "Modify", "Parametric", "Express", "Window", "Help", "Checkables",
  "SHOPEDIT", "DUCT", "PIPING", "Utility", "Nam",
];
const tightMenus = ["Checkables", "SHOPEDIT", "DUCT", "PIPING", "Utility"];

const ribbonTabs = [
  "Home", "Insert", "Annotate", "Parametric", "View", "Manage", "Output",
  "Add-ins", "Collaborate", "Featured Apps", "Express Tools", "PIPE", "DUCT",
  "TIỆN ÍCH", "Nam",
];

const fileTabs = [
  { name: "Start", w: 136 },
  { name: "26. LB.ĐHKK.PL2*", w: 133, closable: true },
  { name: "28. LB.ĐHKK.EL2*", w: 133, closable: true },
  { name: "27. LB.ĐHKK.CL2*", w: 133, closable: true },
  { name: "M0-01~04,M1-01~19*", w: 157, closable: true },
  { name: "Drawing2*", w: 126, closable: true },
];

const taskApps = [
  { icon: "zalo", open: true },
  { icon: "chrome" },
  { icon: "pixel", open: true },
  { icon: "skype", open: true },
  { icon: "monitor", open: true },
  { icon: "acadTile", open: true, active: true },
  { icon: "explorer", open: true },
  { icon: "recorder", open: true },
  { icon: "chrome", open: true },
];

const quickAccess = [
  "newDoc", "open", "save", "saveAs", "openMobile", "saveMobile", "print",
  "undo", "caretSmall", "redo", "caretSmall", "customize",
];

const Big = ({ icon, letter, label, w, arrow }) => (
  <BigTool $w={w}>
    <BigIcon>
      {letter ? <BigLetter>{letter}</BigLetter> : <Icon name={icon} />}
    </BigIcon>
    {label}
    {arrow && (
      <ArrowSlot>
        <Icon name="caretSmall" />
      </ArrowSlot>
    )}
  </BigTool>
);

const Small = ({ icon, label, labelWidth, arrow, gap, on }) => (
  <Tool $gap={gap} $on={on} aria-label={label || icon}>
    <Icon name={icon} />
    {label && <ToolLabel $w={labelWidth}>{label}</ToolLabel>}
    {arrow && <Icon name="caretSmall" />}
  </Tool>
);

const Title = ({ children, plain }) => (
  <PanelTitle>
    {children}
    {!plain && <Icon name="caret" />}
  </PanelTitle>
);

const StatusIcon = ({ icon, w = 22, on }) => (
  <StatusButton $w={w} $on={on} aria-label={icon}>
    <Icon name={icon} />
  </StatusButton>
);

const RibbonPanels = () => (
  <Ribbon>
    <Panel $w={207}>
      <PanelBody>
        <Big icon="line" label="Line" w={38} />
        <Big icon="polyline" label="Polyline" w={44} />
        <Big icon="circle" label="Circle" w={46} arrow />
        <Big icon="arc" label="Arc" w={40} arrow />
        <ToolGrid $cols="36px">
          <Small icon="rectangle" gap={7} arrow />
          <Small icon="ellipse" gap={7} arrow />
          <Small icon="hatch" gap={7} arrow />
        </ToolGrid>
      </PanelBody>
      <Title>Draw</Title>
    </Panel>
    <Panel $w={234}>
      <PanelBody $pad={4}>
        <ToolGrid $cols="67px 65px 71px 16px">
          <Small icon="move" label="Move" />
          <Small icon="rotate" label="Rotate" />
          <Small icon="trim" label="Trim" labelWidth={30} arrow />
          <Small icon="erase" />
          <Small icon="copy" label="Copy" />
          <Small icon="mirror" label="Mirror" />
          <Small icon="fillet" label="Fillet" labelWidth={30} arrow />
          <Small icon="explode" />
          <Small icon="stretch" label="Stretch" />
          <Small icon="scale" label="Scale" />
          <Small icon="array" label="Array" labelWidth={30} arrow />
          <Small icon="offset" />
        </ToolGrid>
      </PanelBody>
      <Title>Modify</Title>
    </Panel>
    <Panel $w={159}>
      <PanelBody $pad={3}>
        <Big letter="A" label="Text" w={38} arrow />
        <Big icon="dimension" label="Dimension" w={62} />
        <ToolGrid $cols="52px">
          <Small icon="linear" gap={6} arrow />
          <Small icon="leader" gap={6} arrow />
          <Small icon="table" label="Table" />
        </ToolGrid>
      </PanelBody>
      <Title>Annotation</Title>
    </Panel>
    <Panel $w={253}>
      <PanelBody $pad={2}>
        <Big icon="layerProps" label={"Layer\nProperties"} w={55} />
        <Stack $top={1} $gap={2}>
          <ComboBox $w={192}>
            <Icon name="bulbOn" />
            <Icon name="sun" />
            <Icon name="unlock" />
            <Swatch $size={13} />
            <select aria-label="Layer">
              <option>0</option>
            </select>
            <Icon name="caret" />
          </ComboBox>
          <ToolGrid $cols="22px 22px 23px 22px 100px">
            <Small icon="layOff" />
            <Small icon="layIso" />
            <Small icon="layFreeze" />
            <Small icon="layLock" />
            <Small icon="layCurrent" label="Make Current" />
            <Small icon="layOn" />
            <Small icon="layUniso" />
            <Small icon="layThaw" />
            <Small icon="layUnlock" />
            <Small icon="layMatch" label="Match Layer" />
          </ToolGrid>
        </Stack>
      </PanelBody>
      <Title>Layers</Title>
    </Panel>
    <Panel $w={74}>
      <PanelBody>
        <Big icon="insert" label="Insert" w={38} />
        <ToolGrid $cols="34px">
          <Small icon="createBlock" />
          <Small icon="editBlock" />
          <Small icon="attribute" gap={6} arrow />
        </ToolGrid>
      </PanelBody>
      <Title>Block</Title>
    </Panel>
    <Panel $w={205}>
      <PanelBody $pad={1}>
        <Big icon="matchProps" label={"Match\nProperties"} w={55} />
        <ToolGrid $cols="20px">
          <Small icon="wheel" />
          <Small icon="weights" />
          <Small icon="linetypes" />
        </ToolGrid>
        <Stack $top={2} $gap={2}>
          <ComboBox $w={126}>
            <Swatch $size={15} $gap={5} />
            <select aria-label="Object color">
              <option>ByLayer</option>
            </select>
            <Icon name="caret" />
          </ComboBox>
          <ComboBox $w={126} $fixed>
            <LineSample />
            <select aria-label="Lineweight">
              <option>ByLayer</option>
            </select>
            <Icon name="caret" />
          </ComboBox>
          <ComboBox $w={126} $fixed>
            <LineSample />
            <select aria-label="Linetype">
              <option>ByLayer</option>
            </select>
            <Icon name="caret" />
          </ComboBox>
        </Stack>
      </PanelBody>
      <TitleWithLauncher>
        <Title>Properties</Title>
        <Launcher aria-label="Properties palette">
          <Icon name="launcher" />
        </Launcher>
      </TitleWithLauncher>
    </Panel>
    <Panel $w={64}>
      <PanelBody>
        <Big icon="group" label="Group" w={37} />
        <ToolGrid $cols="21px">
          <Small icon="ungroup" />
          <Small icon="groupEdit" />
          <Small icon="groupSelect" on />
        </ToolGrid>
      </PanelBody>
      <Title>Groups</Title>
    </Panel>
    <Panel $w={89}>
      <PanelBody $pad={2}>
        <Big icon="measure" label="Measure" w={60} arrow />
        <ToolGrid $cols="20px">
          <Small icon="quickSelect" />
          <Small icon="selectAll" />
          <Small icon="calculator" />
        </ToolGrid>
      </PanelBody>
      <Title>Utilities</Title>
    </Panel>
    <Panel $w={74}>
      <PanelBody $pad={2}>
        <Big icon="paste" label="Paste" w={46} arrow />
        <ToolGrid $cols="20px">
          <Small icon="cut" />
          <Small icon="copyClip" />
        </ToolGrid>
      </PanelBody>
      <Title plain>Clipboard</Title>
    </Panel>
    <Panel>
      <PanelBody $pad={6}>
        <Big icon="base" label="Base" w={42} arrow />
      </PanelBody>
      <Title>View</Title>
    </Panel>
  </Ribbon>
);

const App = () => {
  const [ribbonTab, setRibbonTab] = useState("Home");
  const [fileTab, setFileTab] = useState("Drawing2*");

  return (
    <Window>
      <GlobalStyle />
      <Header>
        <AppButton aria-label="Application menu">
          <Icon name="autocad" />
          <Icon name="caretDark" />
        </AppButton>
        <TitleBar>
          <TitleGroup $w={242} $gap={6} $pad={7}>
            {quickAccess.map((icon, idx) => (
              <IconButton key={idx} aria-label={icon}>
                <Icon name={icon} />
              </IconButton>
            ))}
          </TitleGroup>
          <WindowTitle>{"Autodesk AutoCAD 2019    Drawing2.dwg"}</WindowTitle>
          <TitleGroup $w={413}>
            <IconButton $w={12} aria-label="Collapse search">
              <Icon name="play" />
            </IconButton>
            <SearchBox aria-label="Search" placeholder="Type a keyword or phrase" />
            <IconButton $w={24} aria-label="Find">
              <Icon name="binoculars" />
            </IconButton>
            <SignIn>
              <Icon name="user" />
              Sign In
            </SignIn>
            <IconButton $w={10} aria-label="Account">
              <Icon name="caretSmall" />
            </IconButton>
            <IconButton $w={28} aria-label="Store">
              <Icon name="cart" />
            </IconButton>
            <IconButton $w={18} aria-label="Share">
              <Icon name="share" />
            </IconButton>
            <IconButton $w={12} aria-label="Share options">
              <Icon name="caretSmall" />
            </IconButton>
            <IconButton $w={41} aria-label="Help">
              <HelpBadge>?</HelpBadge>
            </IconButton>
            <Icon name="caretSmall" />
          </TitleGroup>
          <WindowControls>
            {["minimize", "restore", "windowClose"].map((icon) => (
              <IconButton key={icon} aria-label={icon}>
                <Icon name={icon} />
              </IconButton>
            ))}
          </WindowControls>
        </TitleBar>
        <MenuBar>
          {menus.map((menu) => (
            <MenuItem key={menu} $wide={!tightMenus.includes(menu)}>
              {menu}
            </MenuItem>
          ))}
          <DocControls>
            <Icon name="docMin" />
            <Icon name="docRestore" />
          </DocControls>
        </MenuBar>
      </Header>

      <RibbonTabs>
        {ribbonTabs.map((tab) => (
          <RibbonTab
            key={tab}
            $active={tab === ribbonTab}
            onClick={() => setRibbonTab(tab)}
          >
            {tab}
          </RibbonTab>
        ))}
        <TabToggle aria-label="Minimize ribbon">
          <Icon name="ribbonToggle" />
          <Icon name="caretSmall" />
        </TabToggle>
      </RibbonTabs>
      <RibbonPanels />

      <FileTabs>
        {fileTabs.map((tab) => (
          <FileTab
            key={tab.name}
            $w={tab.w}
            $active={tab.name === fileTab}
            onClick={() => setFileTab(tab.name)}
          >
            {tab.name}
            {tab.closable && (
              <IconButton aria-label={`Close ${tab.name}`}>
                <Icon name="close" />
              </IconButton>
            )}
          </FileTab>
        ))}
        <AddTab $gap={12}>+</AddTab>
      </FileTabs>

      <Canvas>
        <ViewControls>[−][Top][2D Wireframe]</ViewControls>
        <Drawing>CÀI ĐẶT TOOL VẼ CƠ ĐIỆN-HVAC</Drawing>
        <PickBox />
      </Canvas>

      <CommandWindow>
        <CommandGutter>
          <Icon name="grip" />
          <Icon name="cmdClose" />
          <Icon name="wrench" />
        </CommandGutter>
        <CommandMain>
          <CommandLog>{"Command:\nEnter new value for NAVBARDISPLAY <1>:"}</CommandLog>
          <CommandLine>
            <Icon name="prompt" />
            <Icon name="caretGrey" />
            <input aria-label="Command" placeholder="Type a command" />
          </CommandLine>
        </CommandMain>
      </CommandWindow>

      <BottomBar>
        <LayoutTabs>
          <LayoutTab $w={58} $active>Model</LayoutTab>
          <LayoutTab $w={62}>Layout1</LayoutTab>
          <LayoutTab $w={62}>Layout2</LayoutTab>
          <AddTab $gap={4}>+</AddTab>
        </LayoutTabs>
        <StatusBar>
          <StatusGroup $w={88}>HVAC15:1.0000</StatusGroup>
          <StatusGroup $w={46}>MODEL</StatusGroup>
          <StatusGroup $w={60}>
            <StatusIcon icon="grid" />
            <StatusIcon icon="dots" />
            <StatusIcon icon="caret" w={14} />
          </StatusGroup>
          <StatusGroup $w={25}>
            <StatusIcon icon="dyn" on />
          </StatusGroup>
          <StatusGroup $w={58}>
            <StatusIcon icon="ortho" />
            <StatusIcon icon="polar" />
            <StatusIcon icon="caret" w={12} />
          </StatusGroup>
          <StatusGroup $w={24}>
            <StatusIcon icon="track" on />
          </StatusGroup>
          <StatusGroup $w={36}>
            <StatusIcon icon="osnap" w={21} on />
            <StatusIcon icon="caret" w={13} />
          </StatusGroup>
          <StatusGroup $w={24}>
            <StatusIcon icon="lwt" />
          </StatusGroup>
          <StatusGroup $w={140}>
            <StatusIcon icon="annoVis" w={21} on />
            <StatusIcon icon="annoAuto" w={21} on />
            <StatusIcon icon="anno" />
            <StatusButton $w={60}>1:1 / 100%</StatusButton>
            <StatusIcon icon="caret" w={12} />
          </StatusGroup>
          <StatusGroup $w={40}>
            <StatusIcon icon="gear" />
            <StatusIcon icon="caret" w={14} />
          </StatusGroup>
          <StatusGroup $w={90}>
            <StatusIcon icon="ruler" w={16} />
            <StatusButton $w={54}>Decimal</StatusButton>
            <StatusIcon icon="caret" w={16} />
          </StatusGroup>
          <StatusGroup $w={24}>
            <StatusIcon icon="quickProps" />
          </StatusGroup>
          <StatusGroup $w={37}>
            <StatusIcon icon="lockUi" w={21} />
            <StatusIcon icon="caret" w={12} />
          </StatusGroup>
          <StatusGroup $w={26}>
            <StatusIcon icon="isolate" />
          </StatusGroup>
          <StatusGroup $w={14}>
            <StatusIcon icon="menu" w={8} />
          </StatusGroup>
        </StatusBar>
      </BottomBar>

      <Taskbar>
        <TaskGroup $pad={4}>
          {["windows", "search", "cortana", "taskview"].map((icon) => (
            <TaskButton key={icon} $w={44} aria-label={icon}>
              <Icon name={icon} />
            </TaskButton>
          ))}
        </TaskGroup>
        <TaskGroup>
          {taskApps.map((app, idx) => (
            <TaskButton key={idx} $w={46} $open={app.open} $active={app.active} aria-label={app.icon}>
              <Icon name={app.icon} />
            </TaskButton>
          ))}
        </TaskGroup>
        <Tray>
          <Weather>
            <Icon name="moon" />
            {"73°F  Clear"}
          </Weather>
          {["chevron", "battery", "unikey", "mic", "wifi", "speaker"].map((icon) => (
            <IconButton key={icon} $w={22} aria-label={icon}>
              <Icon name={icon} />
            </IconButton>
          ))}
          <Language>ENG</Language>
          <Clock>
            12:54 PM
            <br />
            8/22/2022
          </Clock>
          <Notifications aria-label="Notifications">
            <Icon name="notes" />
            <Badge>3</Badge>
          </Notifications>
        </Tray>
      </Taskbar>
    </Window>
  );
};

export default App;
